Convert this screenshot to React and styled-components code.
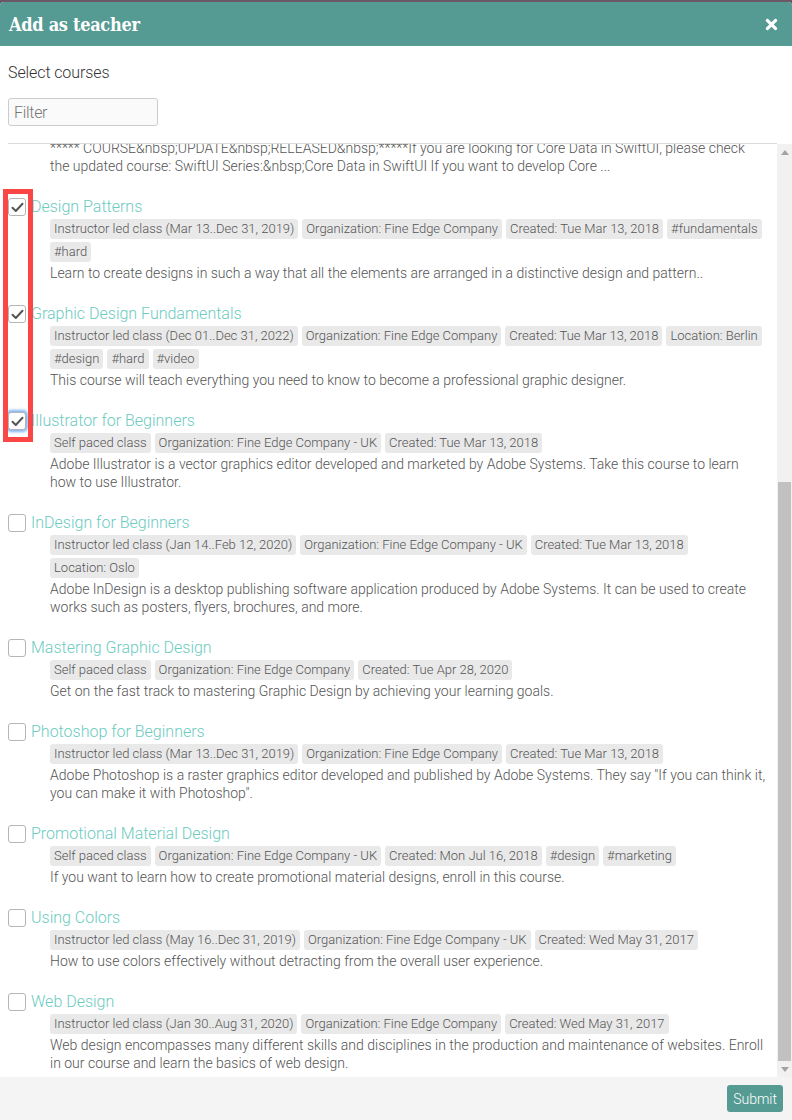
import React, { useLayoutEffect, useRef, useState } from 'react'
import styled, { createGlobalStyle } from 'styled-components'
import { FaTimes } from 'react-icons/fa'

const GlobalStyle = createGlobalStyle`
  html, body {
    margin: 0;
    padding: 0;
    background: #6b5866;
  }
  body {
    font-family: Roboto, "Open Sans", sans-serif;
    font-weight: 300;
    color: #333;
  }
  * { box-sizing: border-box; }
`;

const Modal = styled.div`
  margin-top: 2px;
  height: 1118px;
  display: flex;
  flex-direction: column;
  background: #fff;
  border-radius: 4px 4px 0 0;
  overflow: hidden;
  position: relative;
`;

const Header = styled.div`
  height: 44px;
  flex: none;
  display: flex;
  align-items: center;
  justify-content: space-between;
  padding: 0 12px 0 9px;
  background: #559b93;
  color: #fff;
`;

const Title = styled.h1`
  margin: 0;
  font-family: "DejaVu Serif Condensed", "DejaVu Serif", serif;
  font-stretch: condensed;
  font-size: 18px;
  font-weight: bold;
  letter-spacing: -0.3px;
`;

const Close = styled.button`
  border: none;
  background: none;
  padding: 0;
  color: #fff;
  display: flex;
  cursor: pointer;
`;

const Top = styled.div`
  flex: none;
  padding: 17px 8px 17px;
`;

const Label = styled.div`
  font-size: 16px;
  line-height: 20px;
  letter-spacing: -0.1px;
  color: #333;
  margin-bottom: 15px;
`;

const Filter = styled.input`
  width: 150px;
  height: 28px;
  border: 1px solid #ccc;
  border-radius: 3px;
  background: #fafafa;
  padding: 0 5px;
  font-family: Roboto, sans-serif;
  font-weight: 300;
  font-size: 16px;
  letter-spacing: -0.3px;
  color: #333;
  &::placeholder { color: #777; }
`;

const Divider = styled.div`
  flex: none;
  height: 1px;
  background: #dcdcdc;
  margin: 0 15px 0 8px;
`;

const ListArea = styled.div`
  flex: 1;
  min-height: 0;
  display: flex;
`;

const Viewport = styled.div`
  flex: 1;
  min-width: 0;
  overflow: hidden;
  padding: 8px 10px 5px 8px;
  display: flex;
  flex-direction: column;
  gap: 22px;
`;

const ScrollBar = styled.div`
  width: 15px;
  flex: none;
  display: flex;
  flex-direction: column;
  background: #f1f1f1;
`;

const Arrow = styled.div`
  height: 16px;
  flex: none;
  display: flex;
  align-items: center;
  justify-content: center;
`;

const Track = styled.div`
  flex: 1;
  display: flex;
  flex-direction: column;
`;

const Thumb = styled.div`
  flex: none;
  margin: 0 1px;
  background: #c1c1c1;
`;

const Item = styled.div`
  flex: none;
`;

const Row = styled.label`
  display: flex;
  align-items: center;
  gap: 5px;
  cursor: pointer;
`;

const Box = styled.span`
  width: 18px;
  height: 18px;
  flex: none;
  border: 1px solid #b5b5b5;
  border-radius: 3px;
  background: #fff;
  display: flex;
  align-items: center;
  justify-content: center;
  box-shadow: ${p => (p.$focused ? '0 0 3px 2px #7fb4f0' : 'none')};
`;

const CourseTitle = styled.span`
  font-size: 16px;
  line-height: 20px;
  color: #6ccbc0;
`;

const Details = styled.div`
  margin-left: 42px;
`;

const Tags = styled.div`
  display: flex;
  flex-wrap: wrap;
  gap: 3px 4px;
  margin-top: 2px;
`;

const Tag = styled.span`
  height: 20px;
  line-height: 20px;
  padding: 0 4px;
  border-radius: 3px;
  background: #e9e9e9;
  color: #555;
  font-size: 13px;
  white-space: nowrap;
`;

const Desc = styled.div`
  margin-top: 2px;
  font-size: 14px;
  line-height: 18px;
  color: #555;
`;

const Footer = styled.div`
  flex: none;
  height: 43px;
  background: #f4f4f4;
  display: flex;
  align-items: center;
  justify-content: flex-end;
  padding-right: 9px;
`;

const Submit = styled.button`
  height: 27px;
  padding: 0 6px;
  border: none;
  border-radius: 3px;
  background: #559b93;
  color: #fff;
  font-family: Roboto, sans-serif;
  font-weight: 300;
  font-size: 14px;
  cursor: pointer;
`;

const Marker = styled.div`
  position: absolute;
  left: 3px;
  top: 187px;
  width: 30px;
  height: 253px;
  border: 5px solid #fb4646;
  pointer-events: none;
`;

const courses = [
  {
    title: 'Adobe Acrobat Essentials',
    tags: ['Self paced class', 'Organization: Fine Edge Company - UK', 'Created: Tue Mar 13, 2018'],
    desc: 'Create, edit and share PDF documents with Adobe Acrobat. This course covers forms, comments, signatures and everything you need to work with PDF files every day.',
  },
  {
    title: 'Agile Project Management',
    tags: ['Self paced class', 'Organization: Fine Edge Company', 'Created: Tue Mar 13, 2018', '#agile'],
    desc: 'Learn the principles of agile project management and how to apply them to deliver projects on time.',
  },
  {
    title: 'Basic Accounting',
    tags: ['Instructor led class (Feb 01..Mar 31, 2019)', 'Organization: Fine Edge Company', 'Created: Tue Mar 13, 2018', 'Location: London', '#finance'],
    desc: 'An introduction to the basic concepts of accounting for non-financial professionals.',
  },
  {
    title: 'Business Writing',
    tags: ['Self paced class', 'Organization: Fine Edge Company - UK', 'Created: Tue Mar 13, 2018'],
    desc: 'Write clear and effective e-mails, reports and proposals.',
  },
  {
    title: 'Communication Skills',
    tags: ['Self paced class', 'Organization: Fine Edge Company', 'Created: Wed May 31, 2017'],
    desc: 'Improve the way you communicate with colleagues, customers and partners.',
  },
  {
    title: 'Core Data with SwiftUI',
    tags: ['Self paced class', 'Organization: Fine Edge Company', 'Created: Mon Jan 11, 2021'],
    desc: '***** COURSE&nbsp;UPDATE&nbsp;RELEASED&nbsp;*****If you are looking for Core Data in SwiftUI, please check the updated course: SwiftUI Series:&nbsp;Core Data in SwiftUI If you want to develop Core ...',
  },
  {
    title: 'Design Patterns',
    checked: true,
    tags: ['Instructor led class (Mar 13..Dec 31, 2019)', 'Organization: Fine Edge Company', 'Created: Tue Mar 13, 2018', '#fundamentals', '#hard'],
    desc: 'Learn to create designs in such a way that all the elements are arranged in a distinctive design and pattern..',
  },
  {
    title: 'Graphic Design Fundamentals',
    checked: true,
    tags: ['Instructor led class (Dec 01..Dec 31, 2022)', 'Organization: Fine Edge Company', 'Created: Tue Mar 13, 2018', 'Location: Berlin', '#design', '#hard', '#video'],
    desc: 'This course will teach everything you need to know to become a professional graphic designer.',
  },
  {
    title: 'Illustrator for Beginners',
    checked: true,
    focused: true,
    tags: ['Self paced class', 'Organization: Fine Edge Company - UK', 'Created: Tue Mar 13, 2018'],
    desc: 'Adobe Illustrator is a vector graphics editor developed and marketed by Adobe Systems. Take this course to learn how to use Illustrator.',
  },
  {
    title: 'InDesign for Beginners',
    tags: ['Instructor led class (Jan 14..Feb 12, 2020)', 'Organization: Fine Edge Company - UK', 'Created: Tue Mar 13, 2018', 'Location: Oslo'],
    desc: 'Adobe InDesign is a desktop publishing software application produced by Adobe Systems. It can be used to create works such as posters, flyers, brochures, and more.',
  },
  {
    title: 'Mastering Graphic Design',
    tags: ['Self paced class', 'Organization: Fine Edge Company', 'Created: Tue Apr 28, 2020'],
    desc: 'Get on the fast track to mastering Graphic Design by achieving your learning goals.',
  },
  {
    title: 'Photoshop for Beginners',
    tags: ['Instructor led class (Mar 13..Dec 31, 2019)', 'Organization: Fine Edge Company', 'Created: Tue Mar 13, 2018'],
    desc: 'Adobe Photoshop is a raster graphics editor developed and published by Adobe Systems. They say "If you can think it, you can make it with Photoshop".',
  },
  {
    title: 'Promotional Material Design',
    tags: ['Self paced class', 'Organization: Fine Edge Company - UK', 'Created: Mon Jul 16, 2018', '#design', '#marketing'],
    desc: 'If you want to learn how to create promotional material designs, enroll in this course.',
  },
  {
    title: 'Using Colors',
    tags: ['Instructor led class (May 16..Dec 31, 2019)', 'Organization: Fine Edge Company - UK', 'Created: Wed May 31, 2017'],
    desc: 'How to use colors effectively without detracting from the overall user experience.',
  },
  {
    title: 'Web Design',
    tags: ['Instructor led class (Jan 30..Aug 31, 2020)', 'Organization: Fine Edge Company', 'Created: Wed May 31, 2017'],
    desc: 'Web design encompasses many different skills and disciplines in the production and maintenance of websites. Enroll in our course and learn the basics of web design.',
  },
];

const Check = () => (
  <svg width="13" height="11" viewBox="0 0 13 11">
    <path d="M1.5 5.8 L4.8 9 L11.5 1.8" fill="none" stroke="#555" strokeWidth="2" strokeLinecap="round" strokeLinejoin="round" />
  </svg>
);

const Triangle = ({ down }) => (
  <svg width="8" height="5" viewBox="0 0 8 5">
    <path d={down ? 'M0 0 H8 L4 5 Z' : 'M0 5 H8 L4 0 Z'} fill="#a3a3a3" />
  </svg>
);

const Course = ({ course }) => (
  <Item>
    <Row>
      <Box $focused={course.focused}>{course.checked && <Check />}</Box>
      <CourseTitle>{course.title}</CourseTitle>
    </Row>
    <Details>
      <Tags>
        {course.tags.map(t => <Tag key={t}>{t}</Tag>)}
      </Tags>
      <Desc>{course.desc}</Desc>
    </Details>
  </Item>
);

const App = () => {
  const listRef = useRef(null);
  const trackRef = useRef(null);
  const [thumb, setThumb] = useState({ top: 0, height: 0 });

  useLayoutEffect(() => {
    const el = listRef.current;
    const track = trackRef.current;
    if (!el || !track) return;
    el.scrollTop = el.scrollHeight;
    const trackH = track.clientHeight;
    const height = Math.round(trackH * el.clientHeight / el.scrollHeight);
    const top = Math.round(trackH * el.scrollTop / el.scrollHeight);
    setThumb({ top, height });
  }, []);

  return (
    <>
      <GlobalStyle />
      <Modal>
        <Header>
          <Title>Add as teacher</Title>
          <Close aria-label="Close"><FaTimes size={17} /></Close>
        </Header>
        <Top>
          <Label>Select courses</Label>
          <Filter placeholder="Filter" />
        </Top>
        <Divider />
        <ListArea>
          <Viewport ref={listRef}>
            {courses.map(c => <Course key={c.title} course={c} />)}
          </Viewport>
          <ScrollBar>
            <Arrow><Triangle /></Arrow>
            <Track ref={trackRef}>
              <div style={{ height: thumb.top, flex: 'none' }} />
              <Thumb style={{ height: thumb.height }} />
            </Track>
            <Arrow><Triangle down /></Arrow>
          </ScrollBar>
        </ListArea>
        <Footer>
          <Submit>Submit</Submit>
        </Footer>
        <Marker />
      </Modal>
    </>
  )
}

export default App
